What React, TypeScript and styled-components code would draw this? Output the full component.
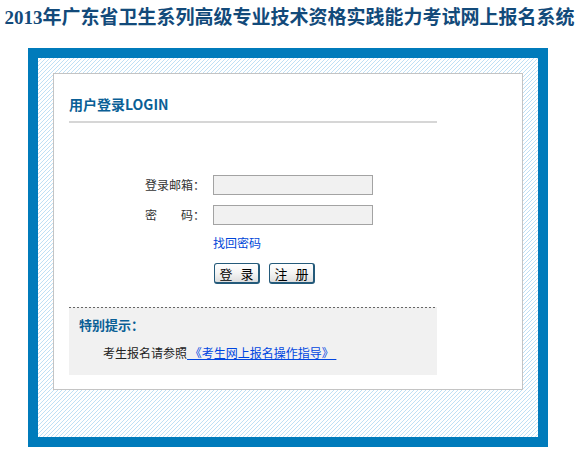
import React from 'react';
import styled, { createGlobalStyle } from 'styled-components';

const GlobalStyle = createGlobalStyle`
  html, body {
    margin: 0;
    padding: 0;
    background: #fff;
  }
  body {
    font-family: "Noto Sans CJK SC", "Liberation Sans", sans-serif;
    font-size: 12px;
    color: #222;
  }
`;

// 4x4 tile with one pale blue pixel per row, forming "/" hatch lines
const hatch =
  "data:image/svg+xml;utf8," +
  encodeURIComponent(
    "<svg xmlns='http://www.w3.org/2000/svg' width='4' height='4' shape-rendering='crispEdges'>" +
      "<rect width='4' height='4' fill='#ffffff'/>" +
      "<rect x='3' y='0' width='1' height='1' fill='#bfe0f5'/>" +
      "<rect x='2' y='1' width='1' height='1' fill='#bfe0f5'/>" +
      "<rect x='1' y='2' width='1' height='1' fill='#bfe0f5'/>" +
      "<rect x='0' y='3' width='1' height='1' fill='#bfe0f5'/>" +
      "</svg>"
  );

const Page = styled.div`
  width: 579px;
`;

const Title = styled.h1`
  margin: 0;
  padding-top: 6px;
  height: 24px;
  line-height: 24px;
  text-align: center;
  white-space: nowrap;
  font-family: "Liberation Serif", "Noto Sans CJK SC", serif;
  font-size: 19px;
  font-weight: bold;
  color: #124a7a;
`;

const Frame = styled.div`
  box-sizing: border-box;
  width: 520px;
  height: 399px;
  margin: 18px 0 0 28px;
  padding: 15px;
  border: 10px solid #007bbb;
  background: #fff url("${hatch}") repeat;
`;

const Panel = styled.div`
  background: #fff;
  border: 1px solid #c4c4c4;
  padding: 0 15px 14px;
`;

const PanelHead = styled.div`
  width: 368px;
  padding: 20px 0 7px;
  line-height: 20px;
  border-bottom: 2px solid #d6d6d6;
  font-size: 14px;
  font-weight: bold;
  color: #0a5f96;
`;

const Form = styled.div`
  margin: 52px 0 0 76px;
  display: grid;
  grid-template-columns: 60px 160px;
  column-gap: 8px;
`;

const Label = styled.label`
  height: 20px;
  line-height: 20px;
  text-align: right;
  white-space: nowrap;
  color: #333;
`;

const Input = styled.input`
  box-sizing: border-box;
  width: 160px;
  height: 20px;
  margin: 0;
  border: 1px solid #a3a3a3;
  background: #f1f1f1;
  outline: none;
`;

const Row = styled.div<{ $gap: number }>`
  display: contents;
  & > * {
    margin-top: ${p => p.$gap}px;
  }
`;

const Forgot = styled.a`
  grid-column: 2;
  height: 20px;
  line-height: 20px;
  color: #0046d8;
  text-decoration: none;
`;

const Buttons = styled.div`
  grid-column: 2;
  display: flex;
  gap: 9px;
  padding-left: 1px;
`;

const Button = styled.button`
  box-sizing: border-box;
  width: 46px;
  height: 21px;
  padding: 0;
  border: 1px solid #245a7a;
  border-right-width: 2px;
  border-bottom-width: 2px;
  border-radius: 3px;
  background: linear-gradient(#ffffff, #f4f4f4 50%, #dedede);
  font-family: "Noto Sans CJK SC", sans-serif;
  font-size: 13px;
  line-height: 17px;
  word-spacing: 5px;
  color: #000;
  white-space: pre;
`;

const Notice = styled.div`
  box-sizing: border-box;
  width: 368px;
  height: 68px;
  margin-top: 23px;
  padding: 8px 0 0 10px;
  background:
    linear-gradient(to right, #666 50%, transparent 50%) top left / 4px 1px repeat-x,
    #f1f1f1;
`;

const NoticeHead = styled.div`
  line-height: 20px;
  font-size: 13px;
  font-weight: bold;
  color: #0a5f96;
`;

const NoticeText = styled.div`
  margin-top: 8px;
  padding-left: 24px;
  line-height: 20px;
  color: #222;
  white-space: pre;

  a {
    color: #0046e0;
    text-decoration: underline;
  }
`;

export default function App() {
  return (
    <Page>
      <GlobalStyle />
      <Title>2013年广东省卫生系列高级专业技术资格实践能力考试网上报名系统</Title>
      <Frame>
        <Panel>
          <PanelHead>用户登录LOGIN</PanelHead>
          <Form>
            <Row $gap={0}>
              <Label>登录邮箱：</Label>
              <Input type="text" />
            </Row>
            <Row $gap={10}>
              <Label>密{'\u3000\u3000'}码：</Label>
              <Input type="password" />
            </Row>
            <Row $gap={8}>
              <Forgot href="#">找回密码</Forgot>
            </Row>
            <Row $gap={10}>
              <Buttons>
                <Button>登 录</Button>
                <Button>注 册</Button>
              </Buttons>
            </Row>
          </Form>
          <Notice>
            <NoticeHead>特别提示：</NoticeHead>
            <NoticeText>
              考生报名请参照<a href="#"> 《考生网上报名操作指导》 </a>
            </NoticeText>
          </Notice>
        </Panel>
      </Frame>
    </Page>
  );
}
